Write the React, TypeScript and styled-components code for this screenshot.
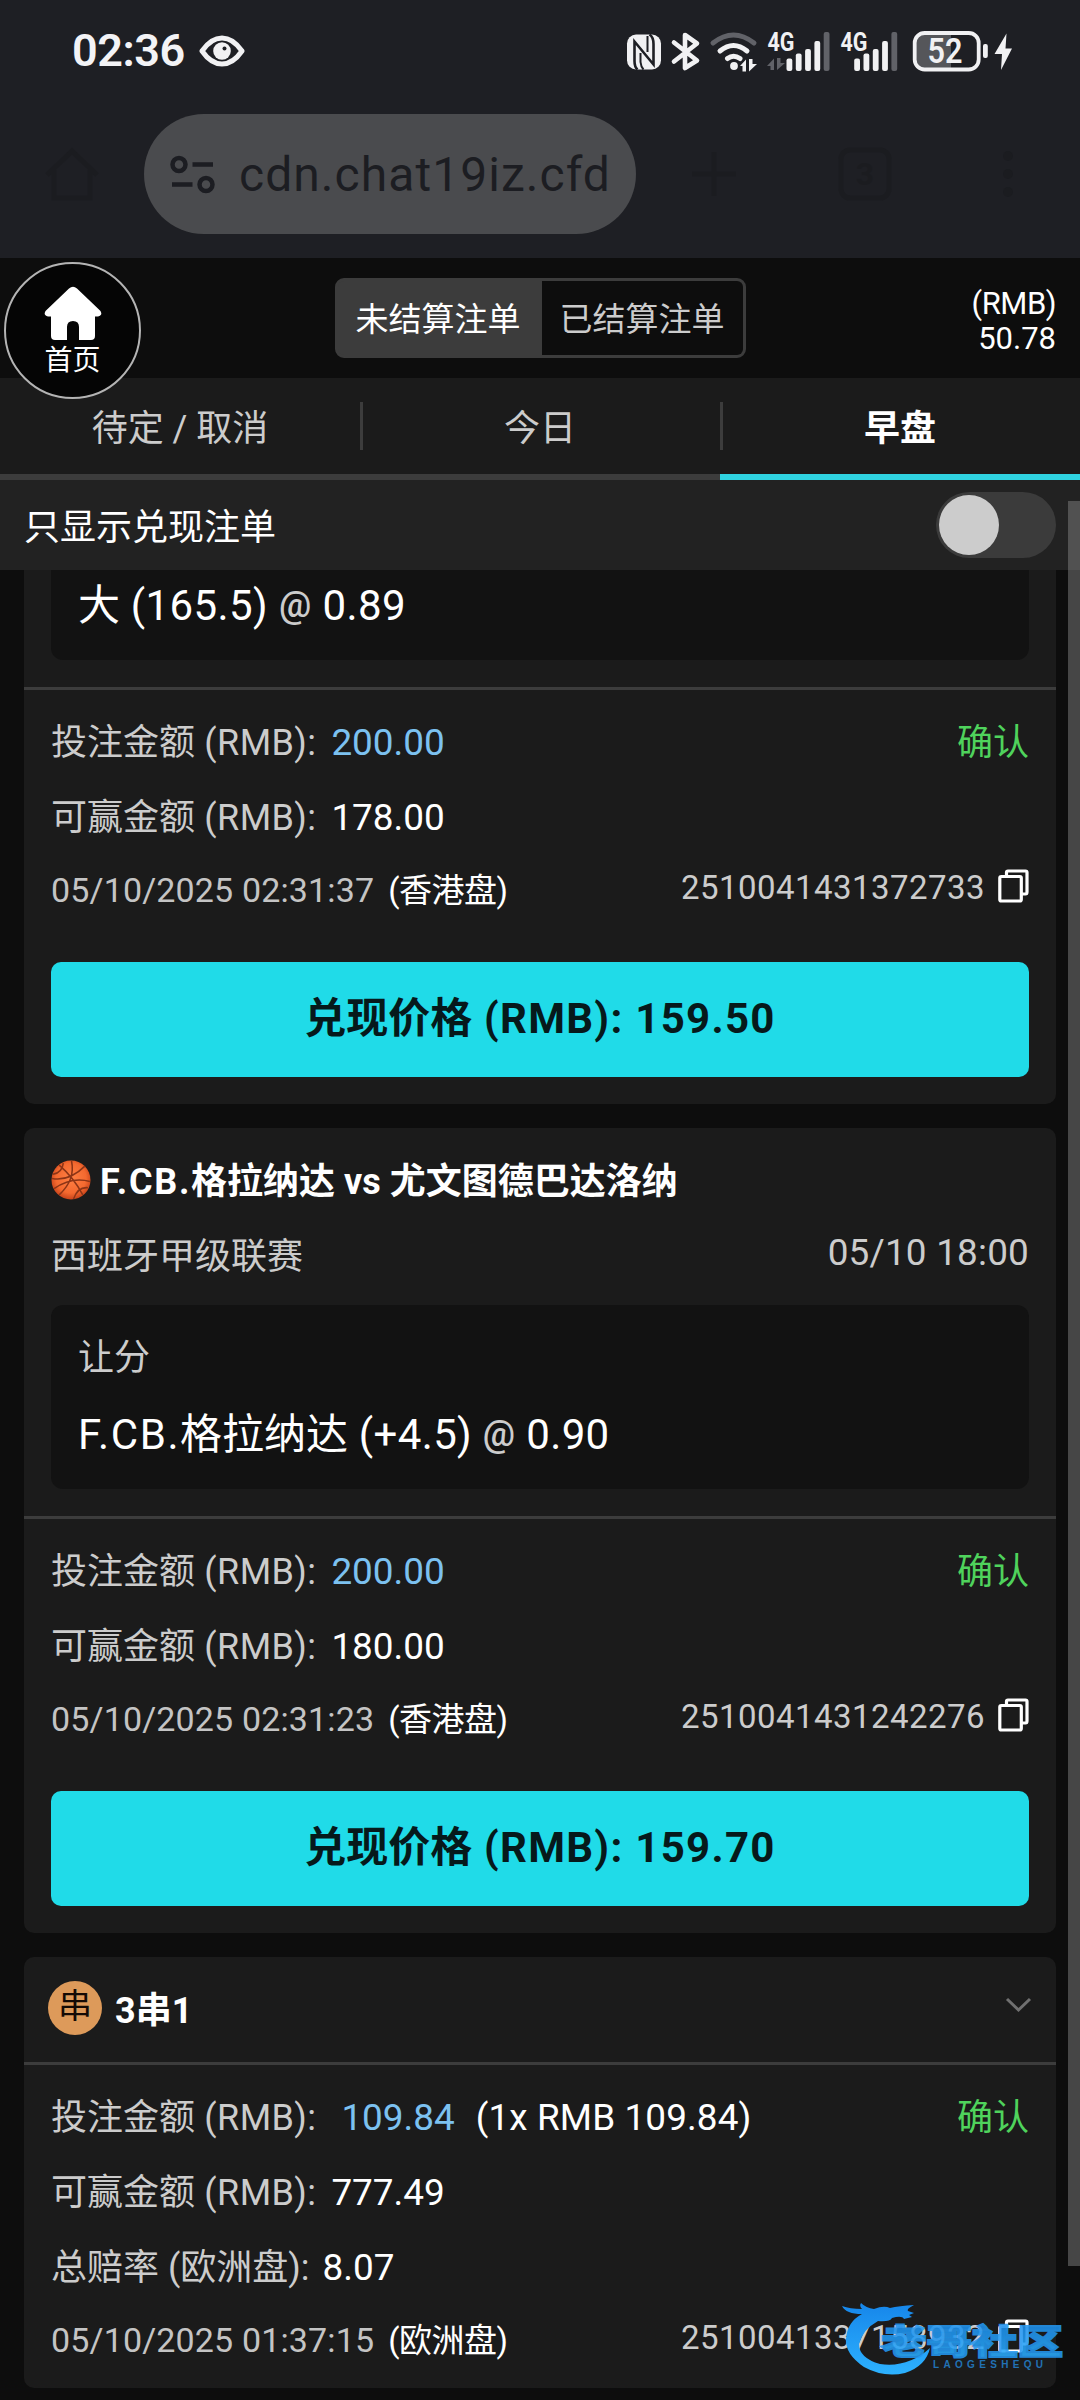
import React from "react";
import styled, { createGlobalStyle } from "styled-components";

const GlobalStyle = createGlobalStyle`
  *, *::before, *::after { box-sizing: border-box; }
  html, body { margin: 0; padding: 0; background: #0d0d0d; }
  body { font-family: Roboto, "Noto Sans CJK SC", sans-serif; color: #fff; font-size: 36px; }
`;

const Screen = styled.div`
  position: relative;
  display: flex;
  flex-direction: column;
  width: 1080px;
  height: 2400px;
  overflow: hidden;
  background: #0d0d0d;
`;

/* ---------- system + browser chrome ---------- */

const Chrome = styled.div`
  display: flex;
  flex-direction: column;
  flex: none;
  height: 258px;
  background: #1e1f24;
`;

const StatusBar = styled.div`
  display: flex;
  align-items: center;
  justify-content: space-between;
  height: 102px;
  padding: 0 68px 0 72px;
`;

const StatusLeft = styled.div`
  display: flex;
  align-items: center;
  gap: 14px;
`;

const Clock = styled.span`
  font-size: 45px;
  font-weight: 600;
  line-height: 102px;
  color: #f3f3f6;
  letter-spacing: -0.5px;
`;

const StatusIcons = styled.svg`
  display: block;
  flex: none;
`;

const AddressBar = styled.div`
  display: flex;
  align-items: center;
  height: 120px;
  margin-top: 12px;
  padding-left: 44px;
`;

const Ghost = styled.svg<{ $ml?: number }>`
  flex: none;
  display: block;
  margin-left: ${(p) => p.$ml ?? 0}px;
`;

const UrlPill = styled.div`
  display: flex;
  align-items: center;
  width: 492px;
  height: 120px;
  margin-left: 44px;
  padding-left: 26px;
  gap: 23px;
  border-radius: 60px;
  background: #4a4b4e;
  color: #1c1d22;
  font-size: 48px;
  letter-spacing: 1.05px;
  white-space: nowrap;
`;

/* ---------- page header ---------- */

const Header = styled.header`
  position: relative;
  display: flex;
  align-items: center;
  justify-content: center;
  flex: none;
  height: 120px;
  background: #0d0d0d;
`;

const HomeButton = styled.button`
  position: absolute;
  left: 4px;
  top: 4px;
  z-index: 3;
  display: flex;
  flex-direction: column;
  align-items: center;
  width: 137px;
  height: 137px;
  padding: 22px 0 0;
  border: 2px solid #b4b4b4;
  border-radius: 50%;
  background: #050505;
  color: #fff;
  font: 28px/40px Roboto, "Noto Sans CJK SC", sans-serif;
`;

const HomeLabel = styled.span`
  margin-top: 1px;
`;

const Segments = styled.div`
  display: flex;
  width: 411px;
  height: 80px;
  border: 3px solid #3c3c3c;
  border-radius: 9px;
  background: #3c3c3c;
  overflow: hidden;
`;

const Segment = styled.div<{ $on?: boolean }>`
  display: flex;
  align-items: center;
  justify-content: center;
  flex: none;
  width: ${(p) => (p.$on ? 204 : 201)}px;
  padding: 0 ${(p) => (p.$on ? 3 : 0)}px 2px 0;
  background: ${(p) => (p.$on ? "#3c3c3c" : "#0d0d0d")};
  color: ${(p) => (p.$on ? "#fff" : "#ccc")};
  font-size: 33px;
`;

const Balance = styled.div`
  position: absolute;
  right: 24px;
  top: 28px;
  text-align: right;
  font-size: 31px;
  line-height: 35px;
`;

const Currency = styled.div`
  letter-spacing: -0.5px;
`;

const Tabs = styled.nav`
  display: flex;
  flex: none;
  height: 102px;
  background: #1b1b1b;
`;

const Tab = styled.div<{ $on?: boolean; $divider?: boolean }>`
  position: relative;
  display: flex;
  align-items: center;
  justify-content: center;
  width: 360px;
  height: 102px;
  padding-bottom: 3px;
  border-bottom: 6px solid ${(p) => (p.$on ? "#2fd3e0" : "#3c3c3c")};
  color: ${(p) => (p.$on ? "#fff" : "#ccc")};
  font-weight: ${(p) => (p.$on ? 700 : 400)};
  &::before {
    content: "";
    position: absolute;
    display: ${(p) => (p.$divider ? "block" : "none")};
    left: 0;
    top: 24px;
    width: 3px;
    height: 48px;
    background: #3c3c3c;
  }
`;

const FilterRow = styled.div`
  display: flex;
  align-items: center;
  justify-content: space-between;
  flex: none;
  height: 90px;
  padding: 0 24px;
  background: #222;
`;

const FilterLabel = styled.span`
  padding-bottom: 3px;
`;

const Switch = styled.div`
  display: flex;
  align-items: center;
  width: 120px;
  height: 66px;
  padding: 3px;
  border-radius: 33px;
  background: #3b3b3b;
`;

const Knob = styled.div`
  width: 60px;
  height: 60px;
  border-radius: 50%;
  background: #ccc;
`;

/* ---------- bets ---------- */

const List = styled.main`
  display: flex;
  flex-direction: column;
  gap: 24px;
  flex: none;
  padding: 0 24px;
`;

const Card = styled.section<{ $cut?: boolean; $h: number }>`
  display: flex;
  flex-direction: column;
  height: ${(p) => p.$h}px;
  border-radius: ${(p) => (p.$cut ? "0 0 10px 10px" : "10px")};
  background: #1b1b1b;
`;

const Match = styled.div`
  display: flex;
  align-items: center;
  gap: 9px;
  height: 70px;
  margin-top: 17px;
  padding: 0 27px;
  font-weight: 700;
  white-space: nowrap;
`;

const MatchTitle = styled.span`
  padding-bottom: 4px;
`;

const League = styled.div`
  display: flex;
  justify-content: space-between;
  align-items: center;
  height: 76px;
  padding: 0 27px 1px;
  color: #ccc;
`;

const Pick = styled.div<{ $cut?: boolean }>`
  display: flex;
  flex-direction: column;
  margin: ${(p) => (p.$cut ? "0 27px 27px" : "14px 27px 27px")};
  height: ${(p) => (p.$cut ? 90 : 184)}px;
  padding: ${(p) => (p.$cut ? "0 27px" : "14px 27px 0")};
  border-radius: ${(p) => (p.$cut ? "0 0 12px 12px" : "12px")};
  background: #121212;
  line-height: 78px;
`;

const Market = styled.div`
  height: 78px;
  color: #ccc;
`;

const Selection = styled.div<{ $cut?: boolean }>`
  font-size: 42px;
  line-height: ${(p) => (p.$cut ? 71 : 76)}px;
  white-space: pre;
`;

const At = styled.span`
  color: #ccc;
  font-size: 36px;
  font-weight: 500;
  position: relative;
  top: -3px;
`;

/* Latin run inside Chinese text, with its own tracking */
const Latin = styled.span<{ $ls: number }>`
  letter-spacing: ${(p) => p.$ls}px;
`;

const Divider = styled.div`
  flex: none;
  height: 3px;
  background: #3c3c3c;
`;

const Details = styled.div`
  display: flex;
  flex-direction: column;
  padding: 15px 27px 0;
`;

const Line = styled.div<{ $small?: boolean }>`
  display: flex;
  justify-content: space-between;
  height: ${(p) => (p.$small ? 70 : 75)}px;
  font-size: ${(p) => (p.$small ? 33 : 36)}px;
  line-height: ${(p) => (p.$small ? 70 : 75)}px;
  white-space: pre;
  color: #ccc;
`;

const Num = styled.span<{ $c?: string; $ml?: number; $ls?: number }>`
  color: ${(p) => p.$c ?? "#fff"};
  margin-left: ${(p) => p.$ml ?? 0}px;
  letter-spacing: ${(p) => p.$ls ?? 0}px;
  font-size: 1.025em;
`;

const Stamp = styled.span`
  color: #c4c4c4;
  font-size: 1.03em;
  letter-spacing: 0.15px;
`;

const Note = styled.span`
  color: #fff;
  margin-left: 14px;
  letter-spacing: -0.5px;
`;

const Status = styled.span`
  padding-top: 1px;
  color: #4fd35c;
`;

const Ticket = styled.span`
  display: flex;
  align-items: center;
  gap: 13px;
  height: 66px;
  line-height: 66px;
  letter-spacing: 0.45px;
`;

const CopySvg = styled.svg`
  display: block;
  flex: none;
  margin-bottom: 4px;
`;

const CashOut = styled.button`
  display: flex;
  align-items: center;
  justify-content: center;
  height: 115px;
  margin: 37px 27px 0;
  padding: 0 0 1px;
  border: 0;
  border-radius: 10px;
  background: #20dbe8;
  color: #06191b;
  font: 700 42px/60px Roboto, "Noto Sans CJK SC", sans-serif;
  white-space: pre;
`;

const ComboHead = styled.div`
  display: flex;
  align-items: center;
  flex: none;
  height: 105px;
  padding: 0 24px 3px;
  font-weight: 700;
`;

const ComboBadge = styled.span`
  display: flex;
  justify-content: center;
  width: 54px;
  height: 54px;
  margin-right: 13px;
  border-radius: 50%;
  background: #dd9a5a;
  color: #140a05;
  font-size: 34px;
  font-weight: 400;
  line-height: 50px;
`;

const ComboTitle = styled.span`
  flex: 1;
  padding-bottom: 3px;
`;

const Chevron = styled.svg`
  display: block;
  margin-bottom: 4px;
`;

const ScrollThumb = styled.div`
  position: absolute;
  left: 1068px;
  top: 501px;
  width: 12px;
  height: 1765px;
  background: rgba(128, 128, 128, 0.5);
`;

const Watermark = styled.div`
  position: absolute;
  left: 842px;
  top: 2298px;
  width: 222px;
  height: 82px;
`;

/* ---------- icons ---------- */

const CopyIcon = () => (
  <CopySvg width="31" height="34" viewBox="0 0 31 34" fill="none" stroke="#fff" strokeWidth="3.2" strokeLinejoin="round">
    <rect x="1.800" y="7.500" width="21.500" height="24.500" rx="1.500" />
    <path d="M8.500 7V3.500Q8.500 2 10 2H27.500Q29 2 29 3.500V23Q29 25 27.500 25H24" />
  </CopySvg>
);

const Basketball = () => (
  <svg width="40" height="40" viewBox="0 0 39 39">
    <defs>
      <radialGradient id="ball" cx="0.5" cy="0.45" r="0.55">
        <stop offset="0" stopColor="#ff8044" />
        <stop offset="0.7" stopColor="#f4692f" />
        <stop offset="1" stopColor="#c8431a" />
      </radialGradient>
    </defs>
    <circle cx="19.500" cy="19.500" r="19" fill="url(#ball)" />
    <g fill="none" stroke="#8c3416" strokeWidth="1.500">
      <path d="M1 18Q18 21 33 6M8 5Q22 17 31 34M20 1Q24 19 8 34M3 28Q20 16 38 21M12 3Q11 12 2 14M36 27Q26 26 22 38" />
    </g>
  </svg>
);

const StatusRight = () => (
  <StatusIcons width="388" height="66" viewBox="624 18 388 66">
    <rect x="627" y="34.500" width="34" height="35" rx="9" fill="#f1f1f3" />
    <g fill="none" stroke="#1e1f24" strokeWidth="2.600">
      <path d="M637.500 69.500Q634.500 67 634.500 61V41.500L653.500 64.500V44Q653.500 37 649.500 34.500" />
      <path d="M640.500 53V62Q641 67 643.500 69.500M647.500 36V52" strokeWidth="2" />
    </g>
    <path d="M674 42.500L697 60.500L685 68V35L697 43.500L674 61.500" fill="none" stroke="#f1f1f3" strokeWidth="4.600" strokeLinejoin="round" strokeLinecap="round" />
    <g fill="none" strokeWidth="5" strokeLinecap="round">
      <path d="M713 43Q733.500 27 754 43" stroke="#616268" />
      <path d="M720 51Q733.500 40 747 51" stroke="#f1f1f3" />
      <path d="M727.500 58.500Q733.500 54 740 58.500" stroke="#f1f1f3" />
    </g>
    <circle cx="734" cy="66" r="3.900" fill="#f1f1f3" />
    <path d="M740 66L746 59.500V71.500H742.500V66ZM749 59V71.500L757 64H752.500V59Z" fill="#f1f1f3" />
    <path d="M767 66L774 58.500V70H770.500V66ZM777 58V70L785 63H780.500V58Z" fill="#616268" />
    <g fill="#f1f1f3" fontFamily="Roboto, sans-serif" fontWeight="700">
      <text x="767.500" y="51" fontSize="26" textLength="27" lengthAdjust="spacingAndGlyphs">4G</text>
      <text x="840.500" y="51" fontSize="26" textLength="27" lengthAdjust="spacingAndGlyphs">4G</text>
    </g>
    {[786.5, 854.2].map((x) => (
      <g key={x} fill="#f1f1f3">
        <rect x={x} y="58.500" width="5.800" height="12.500" rx="2" />
        <rect x={x + 9.3} y="53.500" width="5.800" height="17.500" rx="2" />
        <rect x={x + 18.6} y="49" width="5.800" height="22" rx="2" />
        <rect x={x + 27.9} y="41" width="5.800" height="30" rx="2" />
        <rect x={x + 37.2} y="32" width="5.800" height="39" rx="2" fill="#616268" />
      </g>
    ))}
    <path d="M926 34H951V68H926Q916 68 916 58V44Q916 34 926 34Z" fill="#55565a" />
    <rect x="914.700" y="33" width="64" height="36.500" rx="10" fill="none" stroke="#f1f1f3" strokeWidth="3.800" />
    <rect x="983" y="44" width="4.800" height="14" rx="2" fill="#f1f1f3" />
    <text x="945" y="63" fontSize="35" fontWeight="600" textAnchor="middle" fill="#f1f1f3" fontFamily="Roboto, sans-serif" textLength="35" lengthAdjust="spacingAndGlyphs">52</text>
    <path d="M1006.500 33.500L994.500 54H1002L1001 70L1012 48.500H1005.500Z" fill="#f1f1f3" />
  </StatusIcons>
);

const WatermarkArt = () => (
  <svg width="222" height="82" viewBox="842 2298 222 82">
    <defs>
      <linearGradient id="wm" x1="0" y1="0" x2="0" y2="1">
        <stop offset="0" stopColor="#1686ea" />
        <stop offset="1" stopColor="#2db2ff" />
      </linearGradient>
    </defs>
    <path
      d="M842 2306Q850 2309 862 2309Q859 2306 861 2303Q866 2308 874 2309Q884 2305 890 2308Q899 2306 914 2305Q906 2309 908 2311L914 2313L909 2315L912 2317L904 2319Q902 2315 892 2318Q890 2322 878 2321Q862 2330 859 2344Q859 2358 880 2364Q908 2368 930 2348Q926 2366 905 2373Q884 2378 864 2367Q845 2354 846 2339Q847 2322 862 2314Q846 2314 842 2306Z"
      fill="url(#wm)"
    />
    <text x="881" y="2354" fontFamily='"Noto Sans CJK SC", sans-serif' fontWeight="900" fontSize="34" fill="url(#wm)" stroke="#2497f0" strokeWidth="2" opacity="0.880" textLength="182" lengthAdjust="spacingAndGlyphs">老哥社区</text>
    <text x="933" y="2367.500" fontFamily='"Liberation Sans", sans-serif' fontWeight="700" fontSize="10" fill="#2272b4" textLength="110" lengthAdjust="spacing">LAOGESHEQU</text>
  </svg>
);

/* ---------- composition ---------- */

type Bet = { stake: string; win: string; time: string; id: string; cash: string };

const AmountLabel = ({ name }: { name: string }) => (
  <>
    {name}
    <Latin $ls={0.4}> (RMB):</Latin>
  </>
);

const BetDetails = ({ bet }: { bet: Bet }) => (
  <>
    <Divider />
    <Details>
      <Line>
        <span><AmountLabel name="投注金额" /><Num $c="#7cc1f0" $ml={15}>{bet.stake}</Num></span>
        <Status>确认</Status>
      </Line>
      <Line>
        <span><AmountLabel name="可赢金额" /><Num $ml={15}>{bet.win}</Num></span>
      </Line>
      <Line $small>
        <span><Stamp>{bet.time}</Stamp><Note>(香港盘)</Note></span>
        <Ticket>{bet.id}<CopyIcon /></Ticket>
      </Line>
    </Details>
    <CashOut>兑现价格<Latin $ls={1.3}> (RMB): {bet.cash}</Latin></CashOut>
  </>
);

export default function App() {
  return (
    <>
      <GlobalStyle />
      <Screen>
        <Chrome>
          <StatusBar>
            <StatusLeft>
              <Clock>02:36</Clock>
              <svg width="46" height="32" viewBox="0 0 46 32">
                <path d="M3 16Q12 3 23 3Q34 3 43 16Q34 29 23 29Q12 29 3 16Z" fill="none" stroke="#f1f1f3" strokeWidth="5" strokeLinejoin="round" />
                <circle cx="23" cy="16" r="8.800" fill="#f1f1f3" />
                <circle cx="25.500" cy="13.500" r="2" fill="#1e1f24" />
              </svg>
            </StatusLeft>
            <StatusRight />
          </StatusBar>
          <AddressBar>
            <Ghost width="56" height="56" viewBox="0 0 56 56" fill="none" stroke="#1b1c20" strokeWidth="5">
              <path d="M3 29L28 5L53 29M10 24V52H46V24" />
            </Ghost>
            <UrlPill>
              <svg width="46" height="42" viewBox="0 0 46 42" fill="none" stroke="#1c1d22" strokeWidth="4.500">
                <circle cx="9" cy="11.500" r="6.500" />
                <circle cx="36" cy="31.500" r="6.500" />
                <path d="M22.500 11.500H43M2 31.500H22.500" />
              </svg>
              cdn.chat19iz.cfd
            </UrlPill>
            <Ghost $ml={54} width="48" height="48" viewBox="0 0 48 48" stroke="#1b1c20" strokeWidth="5">
              <path d="M24 2V46M2 24H46" />
            </Ghost>
            <Ghost $ml={100} width="54" height="54" viewBox="0 0 54 54" fill="none" stroke="#1b1c20" strokeWidth="5">
              <rect x="3" y="3" width="48" height="48" rx="9" />
              <text x="27" y="38" fontSize="32" textAnchor="middle" fill="#1b1c20" stroke="none" fontWeight="700" fontFamily="Roboto, sans-serif">3</text>
            </Ghost>
            <Ghost $ml={108} width="16" height="48" viewBox="0 0 16 48" fill="#1b1c20">
              <circle cx="8" cy="6" r="5" />
              <circle cx="8" cy="24" r="5" />
              <circle cx="8" cy="42" r="5" />
            </Ghost>
          </AddressBar>
        </Chrome>

        <Header>
          <HomeButton>
            <svg width="58" height="54" viewBox="0 0 58 54" fill="#fff">
              <path d="M25 2.500Q29 -1 33 2.500L56.500 25Q59 29.500 54 30.500H51V50Q51 54 47 54H35V41Q35 35 29 35Q23 35 23 41V54H11Q7 54 7 50V30.500H4Q-1 29.500 1.500 25Z" />
            </svg>
            <HomeLabel>首页</HomeLabel>
          </HomeButton>
          <Segments>
            <Segment $on>未结算注单</Segment>
            <Segment>已结算注单</Segment>
          </Segments>
          <Balance>
            <Currency>(RMB)</Currency>
            <div>50.78</div>
          </Balance>
        </Header>

        <Tabs>
          <Tab>待定 / 取消</Tab>
          <Tab $divider>今日</Tab>
          <Tab $divider $on>早盘</Tab>
        </Tabs>

        <FilterRow>
          <FilterLabel>只显示兑现注单</FilterLabel>
          <Switch><Knob /></Switch>
        </FilterRow>

        <List>
          <Card $cut $h={534}>
            <Pick $cut>
              <Selection $cut>大<Latin $ls={0.4}> (165.5) <At>@</At> 0.89</Latin></Selection>
            </Pick>
            <BetDetails bet={{ stake: "200.00", win: "178.00", time: "05/10/2025 02:31:37", id: "2510041431372733", cash: "159.50" }} />
          </Card>

          <Card $h={805}>
            <Match>
              <Basketball />
              <MatchTitle><Latin $ls={1.7}>F.CB.</Latin>格拉纳达 vs 尤文图德巴达洛纳</MatchTitle>
            </Match>
            <League>
              <span>西班牙甲级联赛</span>
              <Num $c="#ccc" $ls={0.2}>05/10 18:00</Num>
            </League>
            <Pick>
              <Market>让分</Market>
              <Selection><Latin $ls={1.6}>F.CB.</Latin>格拉纳达<Latin $ls={0.35}> (+4.5) <At>@</At> 0.90</Latin></Selection>
            </Pick>
            <BetDetails bet={{ stake: "200.00", win: "180.00", time: "05/10/2025 02:31:23", id: "2510041431242276", cash: "159.70" }} />
          </Card>

          <Card $h={431}>
            <ComboHead>
              <ComboBadge>串</ComboBadge>
              <ComboTitle>3串1</ComboTitle>
              <Chevron width="28" height="18" viewBox="0 0 28 18" fill="none" stroke="#707070" strokeWidth="3">
                <path d="M3 2L14.500 13L26 2" />
              </Chevron>
            </ComboHead>
            <Divider />
            <Details>
              <Line>
                <span><AmountLabel name="投注金额" /><Num $c="#7cc1f0" $ml={25}>109.84</Num><Num $ml={21} $ls={0.1}>(1x RMB 109.84)</Num></span>
                <Status>确认</Status>
              </Line>
              <Line><span><AmountLabel name="可赢金额" /><Num $ml={15}>777.49</Num></span></Line>
              <Line><span>总赔率 (欧洲盘):<Num $ml={13}>8.07</Num></span></Line>
              <Line $small>
                <span><Stamp>05/10/2025 01:37:15</Stamp><Note>(欧洲盘)</Note></span>
                <Ticket>2510041337158932<CopyIcon /></Ticket>
              </Line>
            </Details>
          </Card>
        </List>

        <ScrollThumb />
        <Watermark><WatermarkArt /></Watermark>
      </Screen>
    </>
  );
}
